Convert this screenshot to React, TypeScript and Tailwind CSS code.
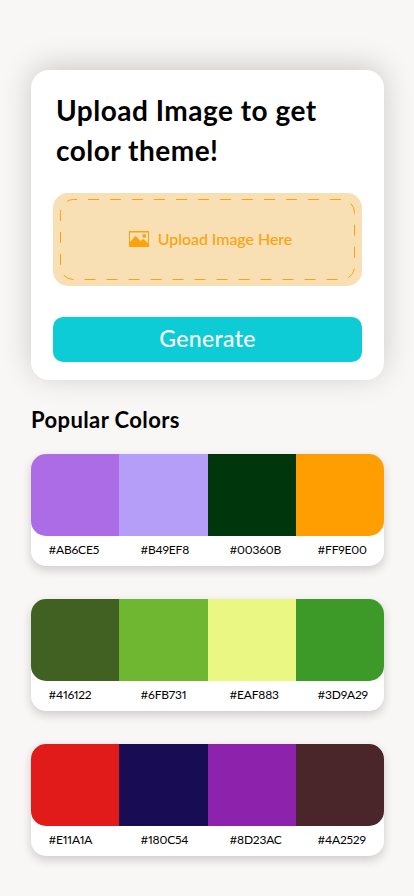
import { useState } from "react";

interface Palette {
    id: number;
    colors: string[];
}

const palettes: Palette[] = [
    { id: 1, colors: ["#AB6CE5", "#B49EF8", "#00360B", "#FF9E00"] },
    { id: 2, colors: ["#416122", "#6FB731", "#EAF883", "#3D9A29"] },
    { id: 3, colors: ["#E11A1A", "#180C54", "#8D23AC", "#4A2529"] },
];

function ImageIcon() {
    return (
        <svg width="20" height="16" viewBox="0 0 20 16" className="shrink-0">
            <path
                fill="#FBA30C"
                fillRule="evenodd"
                d="M0 0h20v16H0V0Zm1 1.5v9.6L6.6 4.7l4.8 5.3 2.8-2 4.8 4V1.5H1Z"
            />
            <circle cx="15.2" cy="4.9" r="1.9" fill="#FBA30C" />
        </svg>
    );
}

function UploadBox({ onClick }: { onClick: () => void }) {
    return (
        <button
            onClick={onClick}
            className="relative flex h-[93px] w-full items-center justify-center rounded-[15px] bg-[#F8DFB4] pb-[1px] pl-[6px]"
        >
            {/* Dashed outline */}
            <svg className="absolute inset-0" width="309" height="93" fill="none">
                <rect
                    x="7.5"
                    y="6.5"
                    width="294"
                    height="80"
                    rx="13"
                    stroke="#FBA30C"
                    strokeDasharray="11 11"
                    strokeDashoffset="7.5"
                />
            </svg>
            <ImageIcon />
            <span className="ml-[9px] text-[16px] leading-5 font-medium tracking-[-0.05px] text-[#FBA30C]">
                Upload Image Here
            </span>
        </button>
    );
}

function PaletteCard({ palette }: { palette: Palette }) {
    return (
        <div className="h-28 rounded-[15px] bg-white shadow-[0_4px_10px_rgba(40,30,50,0.2)]">
            <div className="grid h-[82px] grid-cols-4 overflow-hidden rounded-[15px]">
                {palette.colors.map((color) => (
                    <div key={color} style={{ backgroundColor: color }} />
                ))}
            </div>
            <div className="grid grid-cols-[92px_89px_88px_auto] pt-[6px] pl-[17.5px] text-[12px] leading-4 tracking-[-0.2px] text-black proportional-nums">
                {palette.colors.map((color) => (
                    <span key={color}>{color}</span>
                ))}
            </div>
        </div>
    );
}

export default function App() {
    const [isGenerating, setIsGenerating] = useState(false);

    return (
        <div className="h-[896px] w-[414px] overflow-hidden bg-[#F8F7F5] pt-[70px] pr-[30px] pl-[31px] font-['Lato',sans-serif]">
            {/* Upload card */}
            <div className="h-[310px] rounded-[18px] bg-white px-[22px] pt-[20px] shadow-[0_-4px_30px_rgba(0,0,0,0.18)]">
                <h1 className="pl-[3px] text-[28px] leading-10 font-bold tracking-[0.5px] text-black">
                    Upload Image to get
                    <br />
                    color theme!
                </h1>
                <div className="mt-[23px]">
                    <UploadBox onClick={() => setIsGenerating(false)} />
                </div>
                <button
                    onClick={() => setIsGenerating(true)}
                    disabled={isGenerating}
                    className="mt-[31px] block h-[45px] w-full rounded-[10px] bg-[#0DCCD6] pb-[3px] text-[23px] font-medium tracking-[0.35px] text-white"
                >
                    Generate
                </button>
            </div>

            {/* Popular palettes */}
            <h2 className="mt-[26px] text-[22px] leading-7 font-bold tracking-[0.4px] text-black">Popular Colors</h2>
            <div className="mt-5 flex flex-col gap-[33px]">
                {palettes.map((palette) => (
                    <PaletteCard key={palette.id} palette={palette} />
                ))}
            </div>
        </div>
    );
}
